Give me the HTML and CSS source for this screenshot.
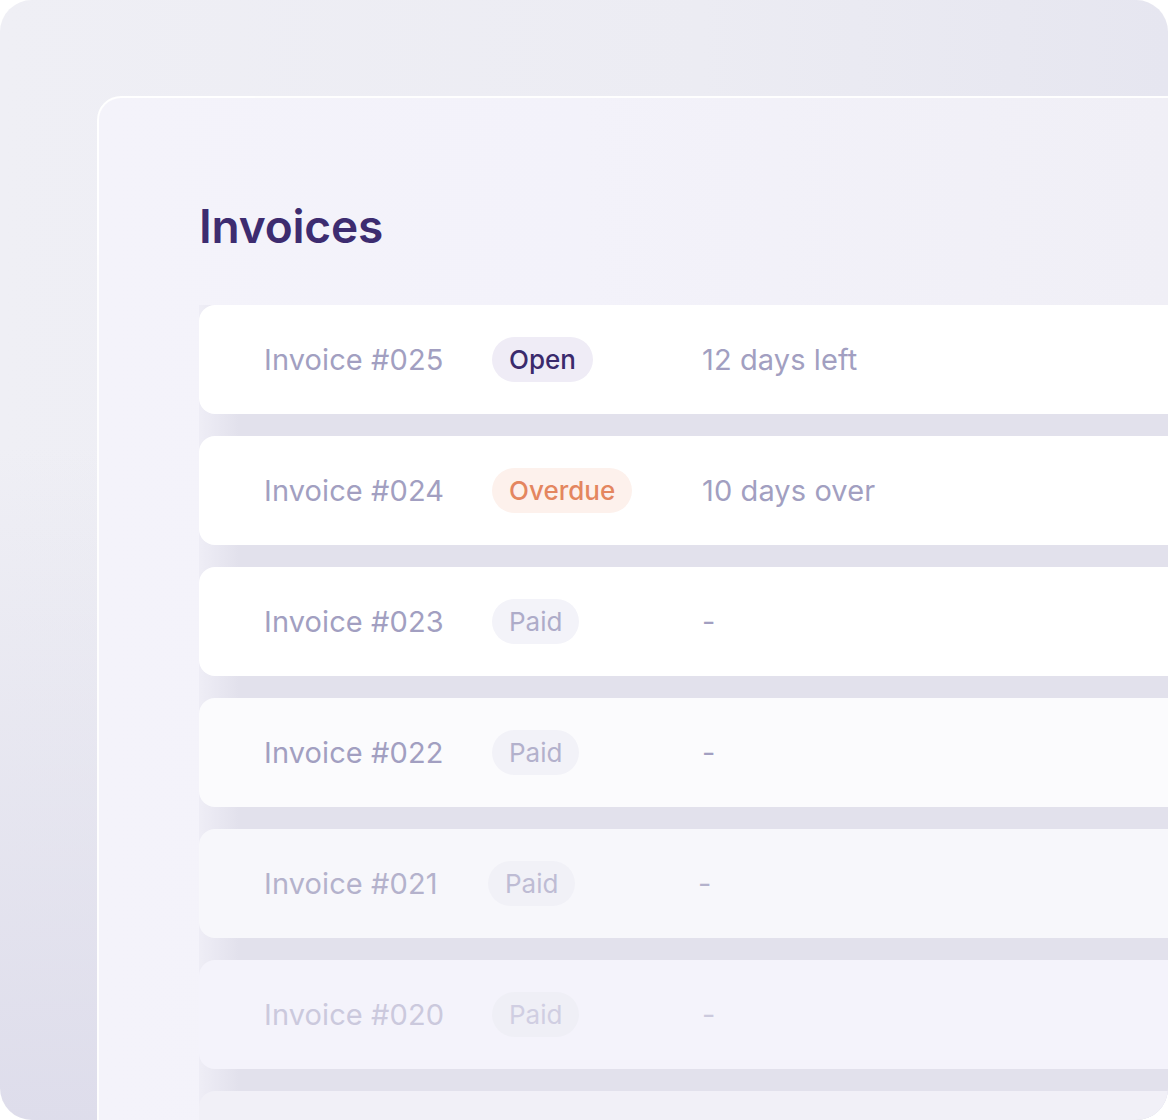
FILE: index.html
```html
<!DOCTYPE html>
<html lang="en">
<head>
<meta charset="utf-8">
<title>Invoices</title>
<link rel="stylesheet" href="styles.css">
</head>
<body>
<div class="frame">
  <div class="panel">
    <h1 class="title">Invoices</h1>
    <div class="list">
      <div class="row r1">
        <span class="name">Invoice #025</span>
        <span class="cell"><span class="badge open">Open</span></span>
        <span class="info">12 days left</span>
      </div>
      <div class="row r2">
        <span class="name">Invoice #024</span>
        <span class="cell"><span class="badge overdue">Overdue</span></span>
        <span class="info">10 days over</span>
      </div>
      <div class="row r3">
        <span class="name">Invoice #023</span>
        <span class="cell"><span class="badge paid">Paid</span></span>
        <span class="info">-</span>
      </div>
      <div class="row r4">
        <span class="name">Invoice #022</span>
        <span class="cell"><span class="badge paid">Paid</span></span>
        <span class="info">-</span>
      </div>
      <div class="row r5">
        <span class="name">Invoice #021</span>
        <span class="cell"><span class="badge paid">Paid</span></span>
        <span class="info">-</span>
      </div>
      <div class="row r6">
        <span class="name">Invoice #020</span>
        <span class="cell"><span class="badge paid">Paid</span></span>
        <span class="info">-</span>
      </div>
      <div class="row r7"></div>
    </div>
  </div>
</div>
</body>
</html>
```

FILE: styles.css
```css
* { box-sizing: border-box; }
html, body { margin: 0; padding: 0; background: #ffffff; }
body { font-family: Inter, "Noto Sans", sans-serif; }

.frame {
  width: 1168px;
  height: 1120px;
  border-radius: 32px;
  overflow: hidden;
  padding: 96px 0 0 97px;
  background:
    linear-gradient(180deg, rgba(239,239,245,0) 40%, rgba(220,219,234,0.9) 100%),
    linear-gradient(90deg, #efeff5 0%, #ececf3 60%, #e6e6f0 100%);
}

.panel {
  height: 100%;
  border-top: 2px solid rgba(255,255,255,0.95);
  border-left: 2px solid rgba(255,255,255,0.95);
  border-top-left-radius: 24px;
  padding: 100px 0 0 100px;
  overflow: hidden;
  background:
    linear-gradient(90deg, #f4f3fa 0%, #f3f2fa 45%, #f0eff6 100%);
}

.title {
  margin: 0;
  font-size: 46px;
  line-height: 56px;
  font-weight: 600;
  color: #3d2c70;
  letter-spacing: -0.2px;
}

.list {
  margin-top: 51px;
  display: flex;
  flex-direction: column;
  gap: 22px;
  background: linear-gradient(90deg, rgba(226,225,236,0.3) 0px, #e2e1ec 40px);
}

.row {
  height: 109px;
  border-radius: 16px 0 0 16px;
  background: #ffffff;
  display: grid;
  grid-template-columns: 228px 210px 1fr;
  align-items: center;
  padding-left: 65px;
  font-size: 29px;
  letter-spacing: 0.1px;
  color: #a29fc1;
  flex-shrink: 0;
}

.name { white-space: nowrap; }
.info { white-space: nowrap; }

.badge {
  display: inline-flex;
  align-items: center;
  height: 45px;
  padding: 0 17px;
  border-radius: 23px;
  font-size: 26px;
  letter-spacing: 0;
  font-weight: 500;
}
.badge.open { background: #efecf6; color: #3a2a6c; }
.badge.overdue { background: #fdf1ec; color: #e4865f; }
.badge.paid { background: #f3f3f9; color: #aeacc9; font-weight: 400; }

.r4 { background: #fbfbfd; }
.r4 .badge.paid { background: #f2f2f8; color: #b3b1cc; }
.r5 { background: #f7f7fb; color: #b4b2cc; }
.r5 .badge.paid { background: #f1f1f7; color: #bebcd4; transform: translateX(-4px); }
.r5 .info { transform: translateX(-4px); }
.r6 { background: #f4f3fb; color: #cbc9dd; }
.r6 .badge.paid { background: #efeff6; color: #d0cee2; }
.r7 { background: #f1f0f7; }
```
